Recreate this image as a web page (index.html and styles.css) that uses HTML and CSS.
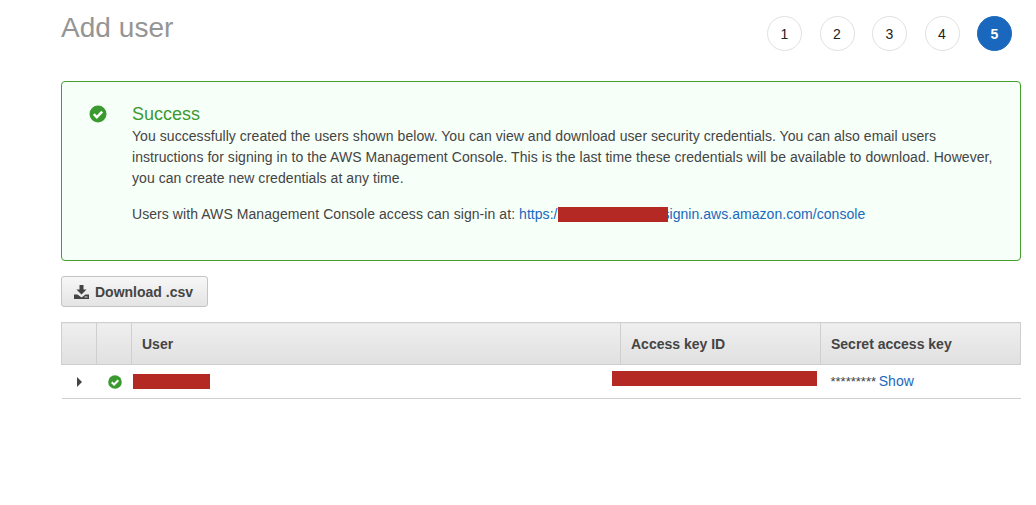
FILE: index.html
```html
<!DOCTYPE html>
<html lang="en">
<head><meta charset="UTF-8"/><meta name="viewport" content="width=device-width, initial-scale=1.0"/>
<title>Add user</title>
<link rel="stylesheet" href="styles.css">
</head><body>
<div class="page">
 <div class="top">
  <h1>Add user</h1>
  <div class="steps">
   <span class="step">1</span>
   <span class="step">2</span>
   <span class="step">3</span>
   <span class="step">4</span>
   <span class="step active">5</span>
  </div>
 </div>
 <div class="alert">
  <svg class="alert-icon" width="18" height="18" viewBox="0 0 18 18"><circle cx="9" cy="9" r="8.5" fill="#3b9a2f"/><path d="M4.8 9.2l3 3 5.4-5.6" fill="none" stroke="#fff" stroke-width="2.4"/></svg>
  <div class="alert-body">
   <h2>Success</h2>
   <p>You successfully created the users shown below. You can view and download user security credentials. You can also email users instructions for signing in to the AWS Management Console. This is the last time these credentials will be available to download. However, you can create new credentials at any time.</p>
   <p class="signin">Users with AWS Management Console access can sign-in at: <a href="#">https:/<span class="redact url-redact"></span>signin.aws.amazon.com/console</a></p>
  </div>
 </div>
 <button class="download">
  <svg width="15" height="14" viewBox="0 0 15 14"><path d="M5.5 0h4v4.5h3l-5 5-5-5h3z" fill="#444"/><path d="M0 9.5h3.5l4 3 4-3H15V14H0z" fill="#444"/><path d="M10.5 12h3" stroke="#ddd" stroke-width="1"/></svg>
  Download .csv
 </button>
 <table class="users">
  <thead>
   <tr><th class="narrow"></th><th class="narrow"></th><th>User</th><th class="key-col">Access key ID</th><th class="secret-col">Secret access key</th></tr>
  </thead>
  <tbody>
   <tr>
    <td class="center"><span class="caret"></span></td>
    <td class="center"><svg class="row-ok" width="14" height="14" viewBox="0 0 14 14"><circle cx="7" cy="7" r="6.8" fill="#3b9a2f"/><path d="M3.7 7.2l2.4 2.3 4.2-4.3" fill="none" stroke="#fff" stroke-width="2"/></svg></td>
    <td class="user-cell"><span class="redact user-redact"></span></td>
    <td class="key-cell"><span class="redact key-redact"></span></td>
    <td class="secret">********* <a href="#">Show</a></td>
   </tr>
  </tbody>
 </table>
</div>
</body></html>
```

FILE: styles.css
```css
body{margin:0;font-family:"Liberation Sans",Arial,sans-serif;font-size:14px;color:#444;background:#fff;}
a{color:#1a68bd;text-decoration:none;}
.page{width:960px;margin-left:61px;padding-top:10px;}
.top{display:flex;justify-content:space-between;align-items:flex-start;height:71px;}
h1{margin:1px 0 0;font-size:28px;line-height:34px;font-weight:400;color:#959595;letter-spacing:.05px;}
.steps{display:flex;gap:17.5px;margin-top:6px;margin-right:9px;}
.step{box-sizing:border-box;width:35px;height:35px;border:1px solid #e1e1e1;border-radius:50%;display:flex;align-items:center;justify-content:center;font-size:14px;color:#222;}
.step.active{background:#1a68bd;border-color:#1a68bd;color:#fff;font-weight:700;}
.alert{box-sizing:border-box;height:180px;border:1px solid #43a02f;border-radius:4px;background:#f7fff9;display:flex;padding:22px 0 0 27px;}
.alert-icon{flex:none;margin-right:25px;margin-top:1px;}
.alert-body{flex:1;padding-right:20px;}
h2{margin:0 0 1px;font-size:18px;line-height:21px;font-weight:400;color:#3b9a2f;}
p{margin:0;line-height:21px;color:#444;letter-spacing:.055px;}
.signin{margin-top:15px;letter-spacing:.07px;}
.signin a{letter-spacing:.04px;}
.redact{display:inline-block;background:#b52925;}
.url-redact{position:relative;width:110px;height:15px;margin-right:-5px;vertical-align:-3px;}
.download{display:flex;align-items:center;gap:6px;box-sizing:border-box;width:147px;height:31px;margin-top:15px;padding:0 0 0 12px;border:1px solid #c4c4c4;border-radius:3px;background:linear-gradient(#f7f7f7,#e4e4e4);font-family:inherit;font-size:14px;font-weight:700;color:#444;}
.users{border-collapse:collapse;table-layout:fixed;width:960px;margin-top:15px;}
th{height:41px;padding:0 10px;background:linear-gradient(#efefef,#e0e0e0);border:1px solid #cfcfcf;border-width:1px 1px 1px 0;text-align:left;font-size:14px;font-weight:700;color:#444;}
th:first-child{border-left:1px solid #cfcfcf;}
.narrow{width:34px;padding:0;}
.key-col{width:200px;box-sizing:border-box;}
.secret-col{width:200px;box-sizing:border-box;}
td{height:32px;padding:0 10px 1px;border-bottom:1px solid #cfcfcf;}
td.center{padding:0;text-align:center;}
.caret{display:inline-block;border-left:5px solid #444;border-top:5px solid transparent;border-bottom:5px solid transparent;vertical-align:0;}
.row-ok{vertical-align:-2px;margin-left:1px;}
.user-cell{padding:0 0 1px 1px;}
.user-redact{display:block;width:77px;height:15px;}
.key-cell{position:relative;}
.key-redact{position:absolute;left:-9px;top:6px;width:205px;height:15px;}
.secret{white-space:nowrap;font-size:13px;word-spacing:-1px;}
.secret a{font-size:14px;letter-spacing:.1px;}
```
